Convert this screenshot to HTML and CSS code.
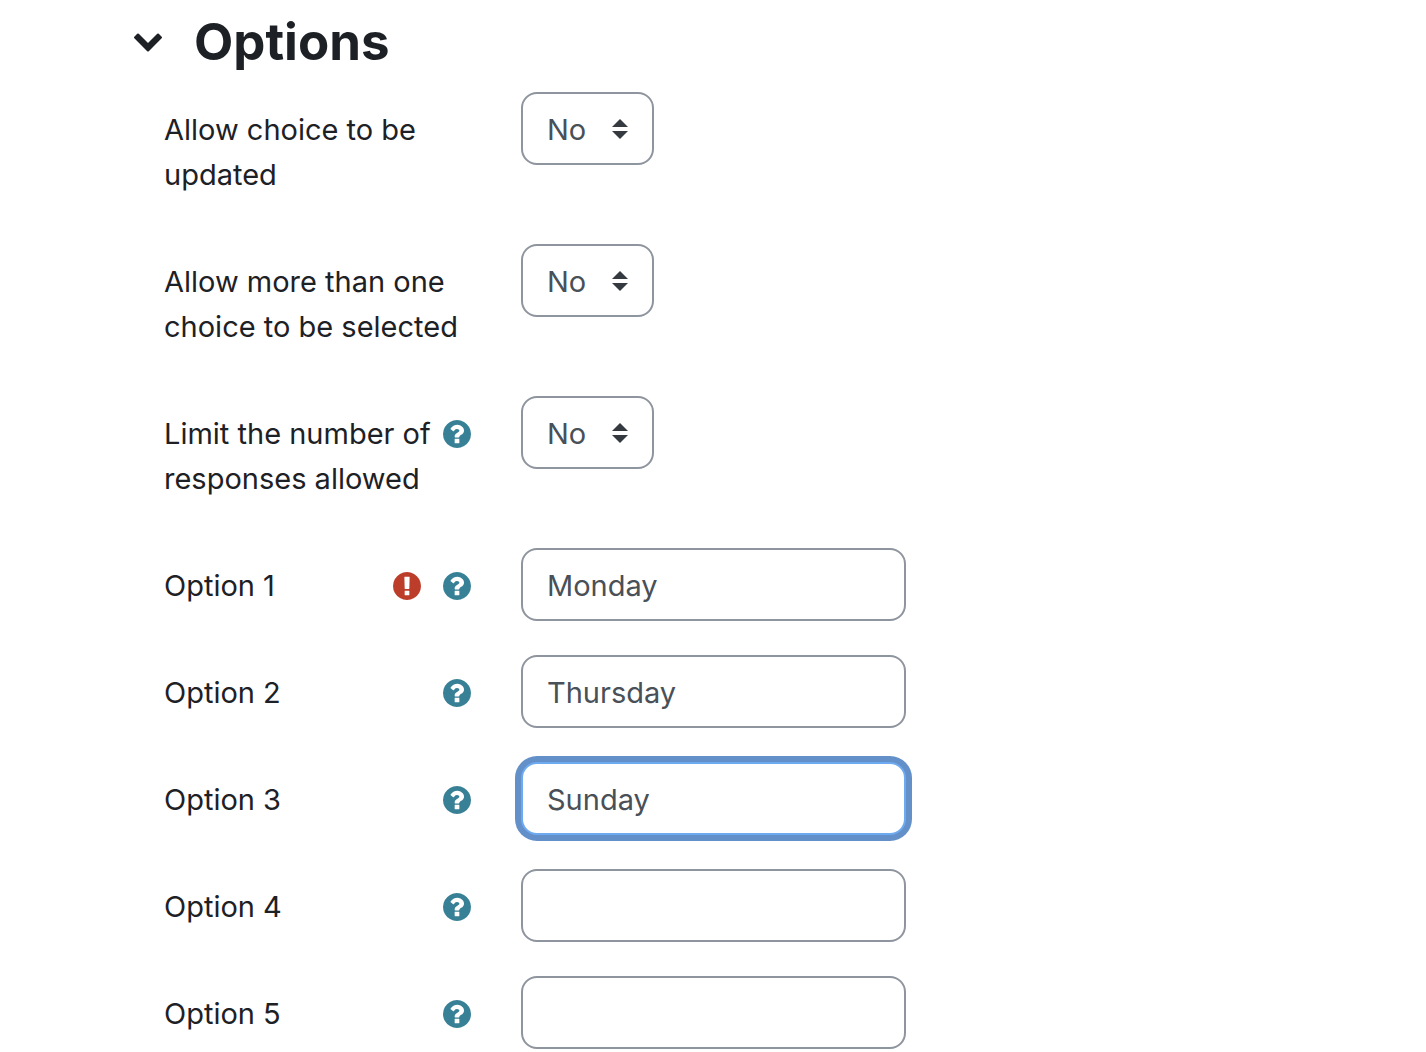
FILE: index.html
```html
<!DOCTYPE html>
<html lang="en">
<head>
  <meta charset="UTF-8">
  <meta name="viewport" content="width=device-width, initial-scale=1.0">
  <title>Options</title>
  <link rel="stylesheet" href="styles.css">
</head>
<body>

<!-- shared icons -->
<svg class="sprite" aria-hidden="true">
  <symbol id="icon-help" viewBox="128 128 1536 1536">
    <path d="M1024 1376v-192q0-14-9-23t-23-9H800q-14 0-23 9t-9 23v192q0 14 9 23t23 9h192q14 0 23-9t9-23zm256-672q0-88-55.500-163T1086 425t-170-41q-243 0-371 213-15 24 8 42l132 100q7 6 19 6 16 0 25-12 53-68 86-92 34-24 86-24 48 0 85.500 26t37.500 59q0 38-20 61t-68 45q-63 28-115.500 86.500T768 1020v36q0 14 9 23t23 9h192q14 0 23-9t9-23q0-19 21.500-49.500T1100 957q32-18 49-28.500t46-35 44.500-48 28-60.500 12.500-81zm384 192q0 209-103 385.500T1281.500 1561 896 1664t-385.500-103T231 1281.500 128 896t103-385.500T510.500 231 896 128t385.500 103T1561 510.500 1664 896z"/>
  </symbol>
  <symbol id="icon-required" viewBox="128 128 1536 1536">
    <path d="M896 128q209 0 385.500 103T1561 510.500 1664 896t-103 385.500-279.500 279.500T896 1664t-385.500-103T231 1281.500 128 896t103-385.500T510.500 231 896 128zm128 1247v-190q0-14-9-23.500t-22-9.500H801q-13 0-23 10t-10 23v190q0 13 10 23t23 10h192q13 0 22-9.500t9-23.500zm-2-344l18-621q0-12-10-18-10-8-24-8H786q-14 0-24 8-10 6-10 18l17 621q0 10 10 17.500t24 7.500h185q14 0 23.500-7.500t10.500-17.500z"/>
  </symbol>
</svg>

<form class="options-form">
  <header class="section-header">
    <button type="button" class="toggle" aria-label="Collapse" aria-expanded="true">
      <svg class="chevron" viewBox="90 533 1612 1035"><path d="M1683 808l-742 741q-19 19-45 19t-45-19l-742-741q-19-19-19-45.500t19-45.500l166-165q19-19 45-19t45 19l531 531 531-531q19-19 45-19t45 19l166 165q19 19 19 45.500t-19 45.500z"/></svg>
    </button>
    <h1>Options</h1>
  </header>

  <div class="fields">
    <div class="form-row">
      <div class="label-col">
        <label for="allow-update">Allow choice to be updated</label>
      </div>
      <div class="select-wrap">
        <select id="allow-update" class="control"><option>No</option><option>Yes</option></select>
        <svg class="arrows" viewBox="0 0 16 20"><path d="M0 8L8 0l8 8zM0 12h16l-8 8z"/></svg>
      </div>
    </div>

    <div class="form-row">
      <div class="label-col">
        <label for="allow-multiple">Allow more than one choice to be selected</label>
      </div>
      <div class="select-wrap">
        <select id="allow-multiple" class="control"><option>No</option><option>Yes</option></select>
        <svg class="arrows" viewBox="0 0 16 20"><path d="M0 8L8 0l8 8zM0 12h16l-8 8z"/></svg>
      </div>
    </div>

    <div class="form-row">
      <div class="label-col">
        <label for="limit">Limit the number of responses allowed</label>
        <div class="icons">
          <button type="button" class="help" aria-label="Help"><svg class="icon"><use href="#icon-help"/></svg></button>
        </div>
      </div>
      <div class="select-wrap">
        <select id="limit" class="control"><option>No</option><option>Yes</option></select>
        <svg class="arrows" viewBox="0 0 16 20"><path d="M0 8L8 0l8 8zM0 12h16l-8 8z"/></svg>
      </div>
    </div>

    <div class="form-row">
      <div class="label-col">
        <label for="option-1">Option 1</label>
        <div class="icons">
          <svg class="icon required" role="img" aria-label="Required"><use href="#icon-required"/></svg>
          <button type="button" class="help" aria-label="Help"><svg class="icon"><use href="#icon-help"/></svg></button>
        </div>
      </div>
      <input type="text" id="option-1" class="control" value="Monday">
    </div>

    <div class="form-row">
      <div class="label-col">
        <label for="option-2">Option 2</label>
        <div class="icons">
          <button type="button" class="help" aria-label="Help"><svg class="icon"><use href="#icon-help"/></svg></button>
        </div>
      </div>
      <input type="text" id="option-2" class="control" value="Thursday">
    </div>

    <div class="form-row">
      <div class="label-col">
        <label for="option-3">Option 3</label>
        <div class="icons">
          <button type="button" class="help" aria-label="Help"><svg class="icon"><use href="#icon-help"/></svg></button>
        </div>
      </div>
      <input type="text" id="option-3" class="control active" value="Sunday">
    </div>

    <div class="form-row">
      <div class="label-col">
        <label for="option-4">Option 4</label>
        <div class="icons">
          <button type="button" class="help" aria-label="Help"><svg class="icon"><use href="#icon-help"/></svg></button>
        </div>
      </div>
      <input type="text" id="option-4" class="control">
    </div>

    <div class="form-row">
      <div class="label-col">
        <label for="option-5">Option 5</label>
        <div class="icons">
          <button type="button" class="help" aria-label="Help"><svg class="icon"><use href="#icon-help"/></svg></button>
        </div>
      </div>
      <input type="text" id="option-5" class="control">
    </div>
  </div>
</form>

</body>
</html>
```
FILE: styles.css
```css
:root {
  --text: #1d2125;
  --control-text: #495057;
  --border: #8f959e;
  --help: #378095;
  --danger: #bd3d2b;
  --focus: #6490ca;
  --focus-border: #6eaaf0;
}

* {
  box-sizing: border-box;
}

body {
  margin: 0;
  background: #fff;
  color: var(--text);
  font-family: Inter, "Liberation Sans", sans-serif;
  font-size: 29px;
  line-height: 45px;
}

.sprite {
  display: none;
}

.options-form {
  padding: 10px 30px 3px 134px;
}

.section-header {
  display: flex;
  align-items: center;
  gap: 32px;
  margin-bottom: 18px;
}

h1 {
  margin: 0;
  font-size: 51px;
  line-height: 64px;
  font-weight: 700;
}

button {
  padding: 0;
  border: none;
  background: none;
  cursor: pointer;
}

.toggle {
  display: flex;
  color: var(--text);
}

.chevron {
  width: 28px;
  height: 19px;
  fill: currentColor;
}

.fields {
  display: flex;
  flex-direction: column;
  gap: 34px;
  padding-left: 30px;
}

.form-row {
  display: grid;
  grid-template-columns: 307px minmax(0, 385px);
  column-gap: 50px;
  align-items: start;
}

.label-col {
  display: flex;
  justify-content: space-between;
  padding: 15px 0 13px;
}

.icons {
  display: flex;
  align-items: center;
  gap: 22px;
  height: 45px;
}

.help {
  display: flex;
  color: var(--help);
}

.icon {
  width: 28px;
  height: 28px;
  fill: currentColor;
}

.required {
  color: var(--danger);
}

.control {
  width: 100%;
  height: 73px;
  padding: 2px 24px 0;
  border: 2px solid var(--border);
  border-radius: 16px;
  background: #fff;
  color: var(--control-text);
  font: inherit;
  outline: none;
}

.control:focus,
.control.active {
  border-color: var(--focus-border);
  box-shadow: 0 0 0 6px var(--focus);
}

.select-wrap {
  position: relative;
  width: 133px;
}

select.control {
  appearance: none;
}

/* drawn over the select's right edge */
.arrows {
  position: absolute;
  top: 27px;
  right: 26px;
  width: 16px;
  height: 20px;
  fill: #343a40;
  pointer-events: none;
}
```
